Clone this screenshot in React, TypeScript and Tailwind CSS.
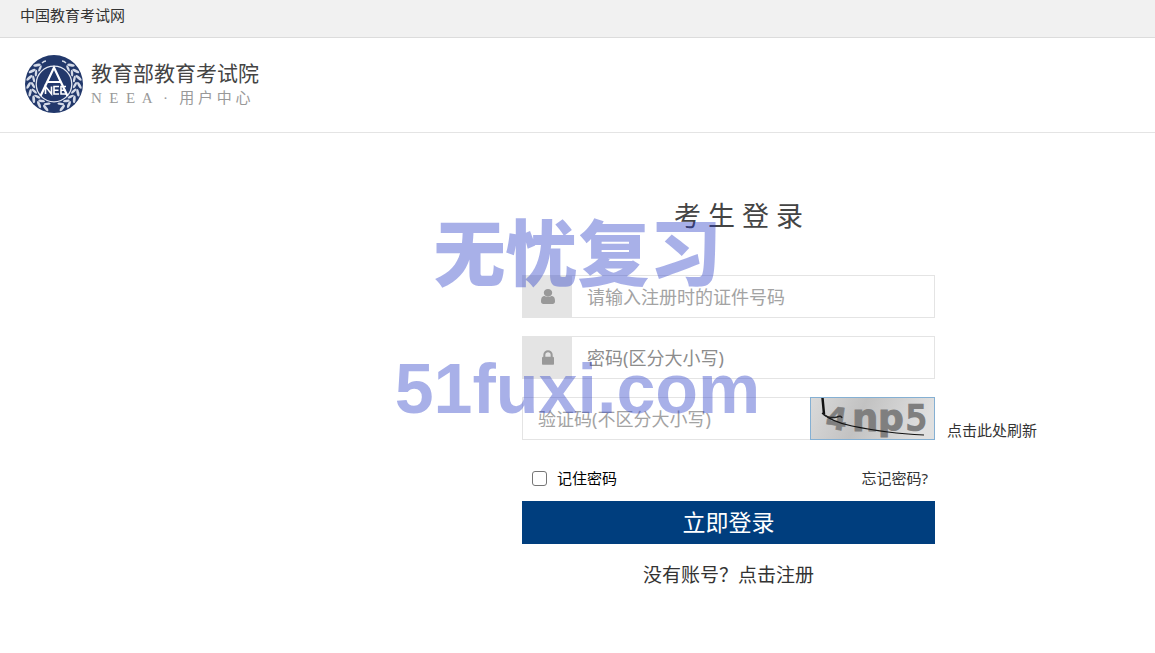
import React from "react";

const LEAF_ANGLES = [42, 59, 76, 93, 110, 127, 144, 161];

function Branch() {
  return (
    <g fill="#d5dbe8">
      {LEAF_ANGLES.map((a) => (
        <g key={a} transform={`rotate(${a} 29 29)`}>
          <ellipse cx="29" cy="3.6" rx="3.8" ry="1.4" transform="rotate(-32 29 3.6)" />
          <ellipse cx="29" cy="8" rx="3.4" ry="1.2" transform="rotate(26 29 8)" />
        </g>
      ))}
    </g>
  );
}

function Emblem() {
  return (
    <svg viewBox="0 0 58 58" className="size-[58px] shrink-0" aria-hidden="true">
      <circle cx="29" cy="29" r="29" fill="#22386b" />
      <Branch />
      <g transform="matrix(-1 0 0 1 58 0)">
        <Branch />
      </g>
      <path d="M17 8Q19 6 21 6M37 6Q39 6 41 8" fill="none" stroke="#d5dbe8" strokeWidth="1.500" />
      <circle cx="29" cy="29" r="17.8" fill="#22386b" stroke="#e3e7f0" strokeWidth="1.300" />
      <path d="M15.500 41L29 12.500L42.500 41M22.500 27H35.500" fill="none" stroke="#fff" strokeWidth="2.200" />
      <path
        d="M20.500 39V31.500L26.500 39V31.500M34 31.500H29V39H34M29 35.200H33.500M41 31.500H36V39H41.500M36 35.200H40.500"
        fill="none"
        stroke="#fff"
        strokeWidth="1.600"
      />
    </svg>
  );
}

function UserIcon() {
  return (
    <svg viewBox="0 128 1280 1536" preserveAspectRatio="none" className="h-[15px] w-[14px]" fill="#999" aria-hidden="true">
      <path d="M1280 1399q0 109-62.500 187t-150.500 78h-854q-88 0-150.500-78t-62.500-187q0-85 8.500-160.500t31.500-152 58.500-131 94-89 134.500-34.500q131 100 313 100t313-100q76 0 134.500 34.500t94 89 58.500 131 31.500 152 8.500 160.500zm-256-887q0 159-112.500 271.500t-271.500 112.500-271.500-112.500-112.500-271.500 112.500-271.500 271.500-112.500 271.500 112.500 112.500 271.500z" />
    </svg>
  );
}

function LockIcon() {
  return (
    <svg viewBox="0 128 1152 1408" className="h-[15px] w-3" fill="#999" aria-hidden="true">
      <path d="M320 768h512v-192q0-106-75-181t-181-75-181 75-75 181v192zm832 96v576q0 40-28 68t-68 28h-960q-40 0-68-28t-28-68v-576q0-40 28-68t68-28h32v-192q0-184 132-316t316-132 316 132 132 316v192h32q40 0 68 28t28 68z" />
    </svg>
  );
}

function CaptchaImage() {
  return (
    <svg viewBox="0 0 125 43" className="h-[43px] w-[125px] shrink-0" role="img" aria-label="验证码">
      <defs>
        <linearGradient id="shade" x1="0" y1="0" x2="1" y2="0.15">
          <stop offset="0" stopColor="#dadada" />
          <stop offset="0.45" stopColor="#c2c2c2" />
          <stop offset="1" stopColor="#e0e0e0" />
        </linearGradient>
      </defs>
      <rect x="0.5" y="0.5" width="124" height="42" fill="url(#shade)" stroke="#85b0d3" />
      <g fill="#7f7f7f" stroke="#7f7f7f" fontFamily="DejaVu Sans" fontWeight="bold">
        <text x="16" y="33" fontSize="31" strokeWidth="0.5" transform="rotate(8 30 22)">4</text>
        <text x="42" y="34" fontSize="37" strokeWidth="1">n</text>
        <text x="68" y="33" fontSize="36" strokeWidth="1">p</text>
        <text x="96" y="33" fontSize="33" fontWeight="normal" strokeWidth="2.5">5</text>
      </g>
      <path d="M12.500 1L14 17" fill="none" stroke="#111" strokeWidth="2.500" />
      <path d="M12 16Q22 25 42 29T78 35T114 38" fill="none" stroke="#111" strokeWidth="1.200" />
      <path d="M13 17Q19 22 27 20Q31 18 32 21" fill="none" stroke="#222" strokeWidth="1.500" />
    </svg>
  );
}

type FieldProps = {
  id: string;
  type: string;
  label: string;
  icon: React.ReactNode;
  tone: string;
};

function Field({ id, type, label, icon, tone }: FieldProps) {
  return (
    <div className="flex h-[43px] border border-[#e4e4e4]">
      <label htmlFor={id} aria-label={label} className="flex w-[49px] shrink-0 items-center justify-center bg-[#e4e4e4]">
        {icon}
      </label>
      <input
        id={id}
        type={type}
        placeholder={label}
        className={`min-w-0 flex-1 px-[15px] text-lg outline-none ${tone}`}
      />
    </div>
  );
}

export default function App() {
  return (
    <div className="relative min-h-screen bg-white font-['Noto_Sans','Noto_Sans_CJK_SC',sans-serif] text-[15px] text-[#333]">
      <nav className="flex h-[38px] items-center border-b border-[#dcdcdc] bg-[#f1f1f1] px-5 pb-1.5">
        <a href="#home">中国教育考试网</a>
      </nav>
      <header className="flex h-[95px] items-center gap-2 border-b border-[#e4e4e4] px-[25px] pb-0.5">
        <Emblem />
        <div>
          <div className="text-[21px] leading-7 text-[#444]">教育部教育考试院</div>
          <div className="whitespace-pre font-['Liberation_Serif','Noto_Sans_CJK_SC',serif] text-[15px] leading-[22px] text-[#999]">
            {"N  E  E  A   ·   用 户 中 心"}
          </div>
        </div>
      </header>

      <main className="ml-[45.2%] w-[413px] pt-16">
        <h1 className="pl-5 text-center text-[27px] leading-[38px] text-[#444]">考 生 登 录</h1>
        <form className="mt-10 flex flex-col" onSubmit={(e) => e.preventDefault()}>
          <div className="flex flex-col gap-[18px]">
            <Field id="account" type="text" label="请输入注册时的证件号码" icon={<UserIcon />} tone="placeholder:text-[#a3a3a3]" />
            <Field id="password" type="password" label="密码(区分大小写)" icon={<LockIcon />} tone="placeholder:text-[#8c8c8c]" />
            <div className="flex items-end gap-3">
              <div className="flex w-full shrink-0">
                <input
                  id="captcha"
                  type="text"
                  aria-label="验证码(不区分大小写)"
                  placeholder="验证码(不区分大小写)"
                  className="h-[43px] min-w-0 flex-1 border border-r-0 border-[#e4e4e4] px-[15px] text-lg outline-none placeholder:text-[#a3a3a3]"
                />
                <CaptchaImage />
              </div>
              <a href="#refresh" className="shrink-0 leading-5">点击此处刷新</a>
            </div>
          </div>
          <div className="flex h-[61px] items-center justify-between pt-4 pr-[7px] pl-[10px]">
            <label htmlFor="remember" className="flex items-center gap-2.5 text-black">
              <input
                id="remember"
                type="checkbox"
                className="size-[15px] appearance-none rounded-[3px] border border-[#767676] bg-white checked:bg-[#003e7e]"
              />
              记住密码
            </label>
            <a href="#forgot">忘记密码?</a>
          </div>
          <button type="submit" className="h-[43px] bg-[#003e7e] text-[23px] leading-none text-white">
            立即登录
          </button>
        </form>
        <p className="mt-4 text-center text-[19px] leading-[30px]">
          没有账号？<a href="#register">点击注册</a>
        </p>
      </main>

      <div className="pointer-events-none absolute inset-x-0 top-0 pt-[188px] text-center font-['Liberation_Sans','Noto_Sans_CJK_SC',sans-serif] leading-[134px] font-black text-[#2639c6]/40">
        <div className="text-7xl leading-[134px]">无忧复习</div>
        <div className="text-[70px]">51fuxi.com</div>
      </div>
    </div>
  );
}
